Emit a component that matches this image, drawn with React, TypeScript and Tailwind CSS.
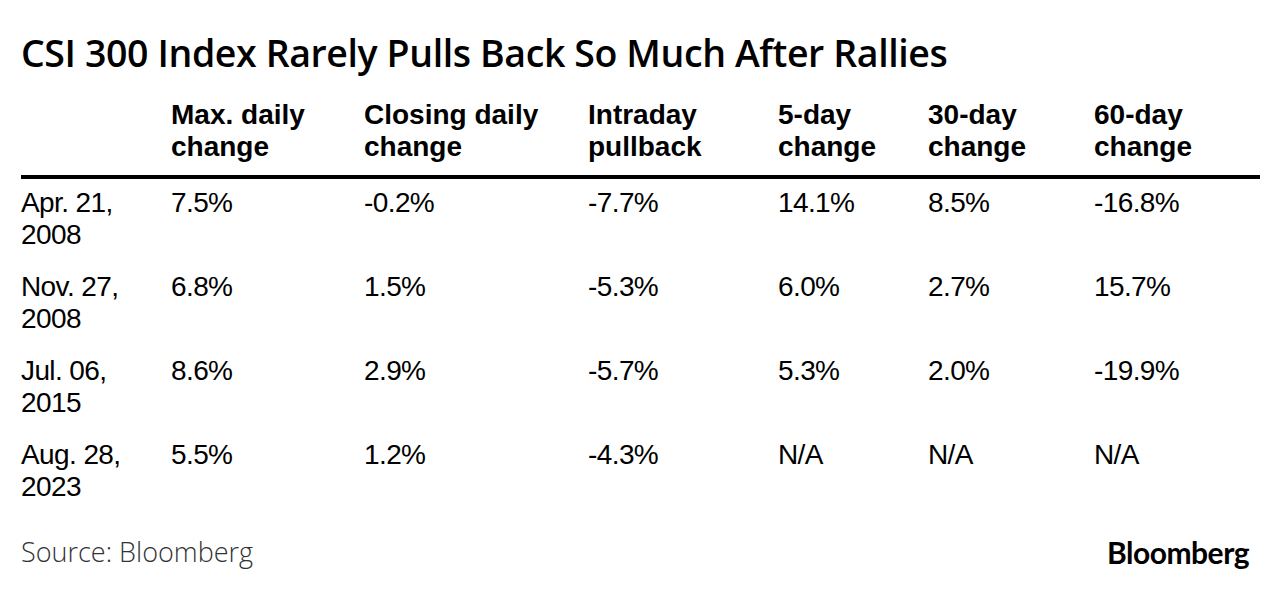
const cols = [
  { left: 'Max. daily', right: 'change' },
  { left: 'Closing daily', right: 'change' },
  { left: 'Intraday', right: 'pullback' },
  { left: '5-day', right: 'change' },
  { left: '30-day', right: 'change' },
  { left: '60-day', right: 'change' },
];

const rows = [
  { date: ['Apr. 21,', '2008'], vals: ['7.5%', '-0.2%', '-7.7%', '14.1%', '8.5%', '-16.8%'] },
  { date: ['Nov. 27,', '2008'], vals: ['6.8%', '1.5%', '-5.3%', '6.0%', '2.7%', '15.7%'] },
  { date: ['Jul. 06,', '2015'], vals: ['8.6%', '2.9%', '-5.7%', '5.3%', '2.0%', '-19.9%'] },
  { date: ['Aug. 28,', '2023'], vals: ['5.5%', '1.2%', '-4.3%', 'N/A', 'N/A', 'N/A'] },
];

const grid = 'grid grid-cols-[150px_193px_224px_190px_150px_166px_1fr]';

export default function App() {
  return (
    <div className="w-[1280px] h-[589px] bg-white text-black pl-[21px] pr-[20px] pt-[29px]">
      <h1 className="font-['Open_Sans',sans-serif] font-semibold text-[37.5px] leading-[48px] tracking-[-0.4px]">
        CSI 300 Index Rarely Pulls Back So Much After Rallies
      </h1>

      <div className={`${grid} mt-[22px] pb-[12px] border-b-4 border-black font-['Liberation_Sans',Arial,sans-serif] font-bold text-[28px] leading-[32px]`}>
        <div />
        {cols.map((c) => (
          <div key={c.left}>
            <div>{c.left}</div>
            <div>{c.right}</div>
          </div>
        ))}
      </div>

      <div className="pt-[8px] font-['Liberation_Sans',Arial,sans-serif] text-[28px] leading-[32px] tracking-[-0.6px]">
        {rows.map((r) => (
          <div key={r.date[0]} className={`${grid} h-[84px]`}>
            <div>
              <div>{r.date[0]}</div>
              <div>{r.date[1]}</div>
            </div>
            {r.vals.map((v, i) => (
              <div key={i}>{v}</div>
            ))}
          </div>
        ))}
      </div>

      <div className="flex items-center justify-between mt-[7px] pr-[11px]">
        <span className="font-['Open_Sans',sans-serif] font-light text-[27px] text-[#333]">
          Source: Bloomberg
        </span>
        <span className="font-['Lato',sans-serif] font-bold text-[30px] tracking-[-0.5px]">
          Bloomberg
        </span>
      </div>
    </div>
  );
}
